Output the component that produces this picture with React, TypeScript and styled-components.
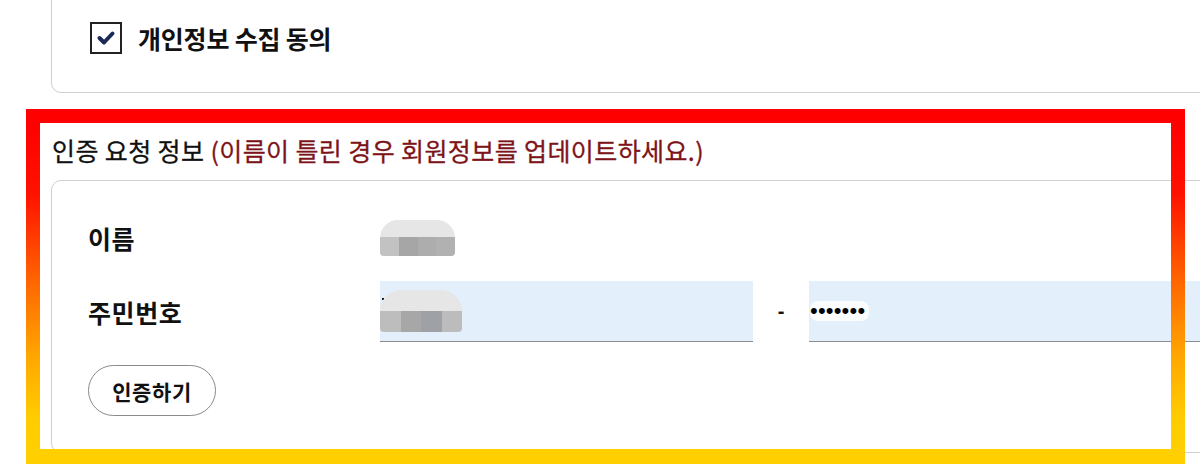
import React from 'react';
import styled, { createGlobalStyle } from 'styled-components';

const GlobalStyle = createGlobalStyle`
  html, body {
    margin: 0;
    padding: 0;
    background: #fff;
    overflow: hidden;
  }
  body {
    font-family: "Noto Sans CJK KR", "Noto Sans", sans-serif;
    color: #111;
  }
`;

const Page = styled.div`
  position: relative;
  display: flow-root;
  width: 1320px;
  height: 464px;
  padding-left: 51px;
  box-sizing: border-box;
`;

const Card = styled.div`
  border: 1px solid #cfcfcf;
  border-radius: 10px;
  background: #fff;
`;

const AgreeCard = styled(Card)`
  margin-top: -30px;
  padding: 51px 0 38px 38px;
  display: flex;
  align-items: center;
  gap: 16px;
`;

const CheckBox = styled.span`
  width: 28px;
  height: 28px;
  border: 2px solid #222;
  display: flex;
  align-items: center;
  justify-content: center;
  background: #fff;
`;

const AgreeLabel = styled.span`
  font-size: 25px;
  font-weight: 700;
  line-height: 32px;
  letter-spacing: -0.2px;
`;

const Heading = styled.h3`
  margin: 41px 0 14px 1px;
  font-size: 25px;
  font-weight: 400;
  line-height: 32px;
  letter-spacing: 0.4px;
  color: #111;
  -webkit-text-stroke: 0.3px currentColor;
`;

const Notice = styled.span`
  color: #7d1419;
`;

const FormCard = styled(Card)`
  padding: 37px 0 36px 36px;
  display: grid;
  grid-template-columns: 292px 1fr;
  row-gap: 23px;
  align-items: center;
`;

const Label = styled.div`
  font-size: 25px;
  font-weight: 700;
  line-height: 40px;
  letter-spacing: 0.6px;
`;

const Value = styled.div`
  height: 40px;
  display: flex;
  align-items: center;
`;

const SsnRow = styled.div`
  display: flex;
  align-items: center;
`;

const Field = styled.div<{ w: number }>`
  position: relative;
  width: ${p => p.w}px;
  height: 60px;
  background: #e3f0fb;
  border-bottom: 1px solid #8c8c8c;
  display: flex;
  align-items: center;
`;

const Dash = styled.span`
  width: 56px;
  text-align: center;
  font-family: "Liberation Sans", sans-serif;
  font-size: 20px;
  font-weight: 700;
`;

const Dots = styled.span`
  margin-left: 1px;
  padding: 0 4px 0 0;
  background: #fbfdff;
  border-radius: 8px;
  font-family: "Liberation Sans", sans-serif;
  font-size: 22px;
  line-height: 20px;
  letter-spacing: 0.2px;
  color: #000;
`;

const Caret = styled.span`
  position: absolute;
  left: 2px;
  top: 17px;
  width: 2px;
  height: 2px;
  background: #111;
`;

const Blur = styled.div<{ w: number; h: number }>`
  position: relative;
  width: ${p => p.w}px;
  height: ${p => p.h}px;
  border-radius: ${p => p.h / 2}px ${p => p.h / 2}px 4px 4px;
  background: #e6e6e6;
  overflow: hidden;
  filter: blur(0.6px);
`;

const BlockRow = styled.div<{ top: number; h: number }>`
  position: absolute;
  left: 0;
  right: 0;
  top: ${p => p.top}px;
  height: ${p => p.h}px;
  display: flex;
`;

const Block = styled.span<{ c: string }>`
  flex: 1;
  background: ${p => p.c};
`;

const Button = styled.button`
  width: 128px;
  height: 51px;
  border: 1px solid #8a8a8a;
  border-radius: 26px;
  background: #fff;
  font-family: "Noto Sans CJK KR", sans-serif;
  font-size: 21px;
  font-weight: 700;
  letter-spacing: 0.6px;
  color: #111;
  padding: 0;
`;

const Highlight = styled.div`
  position: absolute;
  left: 26px;
  top: 109px;
  width: 1159px;
  height: 355px;
  box-sizing: border-box;
  border: 14px solid transparent;
  border-bottom-width: 15px;
  border-image: linear-gradient(to bottom, #ff0000 0%, #ff1200 22%, #ff6a00 50%, #ffa800 72%, #ffcc00 90%, #ffcf00 100%) 1;
  pointer-events: none;
`;

function Masked({ w, h, split, colors }: { w: number; h: number; split: number; colors: string[] }) {
  return (
    <Blur w={w} h={h}>
      <BlockRow top={split} h={h - split}>
        {colors.map((c, i) => <Block key={i} c={c} />)}
      </BlockRow>
    </Blur>
  );
}

export default function App() {
  return (
    <>
      <GlobalStyle />
      <Page>
        <AgreeCard>
          <CheckBox>
            <svg width="20" height="16" viewBox="0 0 20 16">
              <path d="M3.5 8 L8 12.5 L16.5 3.5" fill="none" stroke="#1b2a55" strokeWidth="4" strokeLinecap="round" strokeLinejoin="round" />
            </svg>
          </CheckBox>
          <AgreeLabel>개인정보 수집 동의</AgreeLabel>
        </AgreeCard>

        <Heading>
          인증 요청 정보 <Notice>(이름이 틀린 경우 회원정보를 업데이트하세요.)</Notice>
        </Heading>

        <FormCard>
          <Label>이름</Label>
          <Value>
            <Masked w={75} h={36} split={17} colors={['#c2c2c2', '#a6a6a6', '#adadad', '#b1b1b1']} />
          </Value>

          <Label>주민번호</Label>
          <SsnRow>
            <Field w={373}>
              <Caret />
              <Masked w={82} h={42} split={21} colors={['#bdbdbd', '#a7a7a7', '#9ea2a6', '#bcbcbc']} />
            </Field>
            <Dash>-</Dash>
            <Field w={420}>
              <Dots>•••••••</Dots>
            </Field>
          </SsnRow>

          <div>
            <Button type="button">인증하기</Button>
          </div>
        </FormCard>

        <Highlight />
      </Page>
    </>
  );
}
